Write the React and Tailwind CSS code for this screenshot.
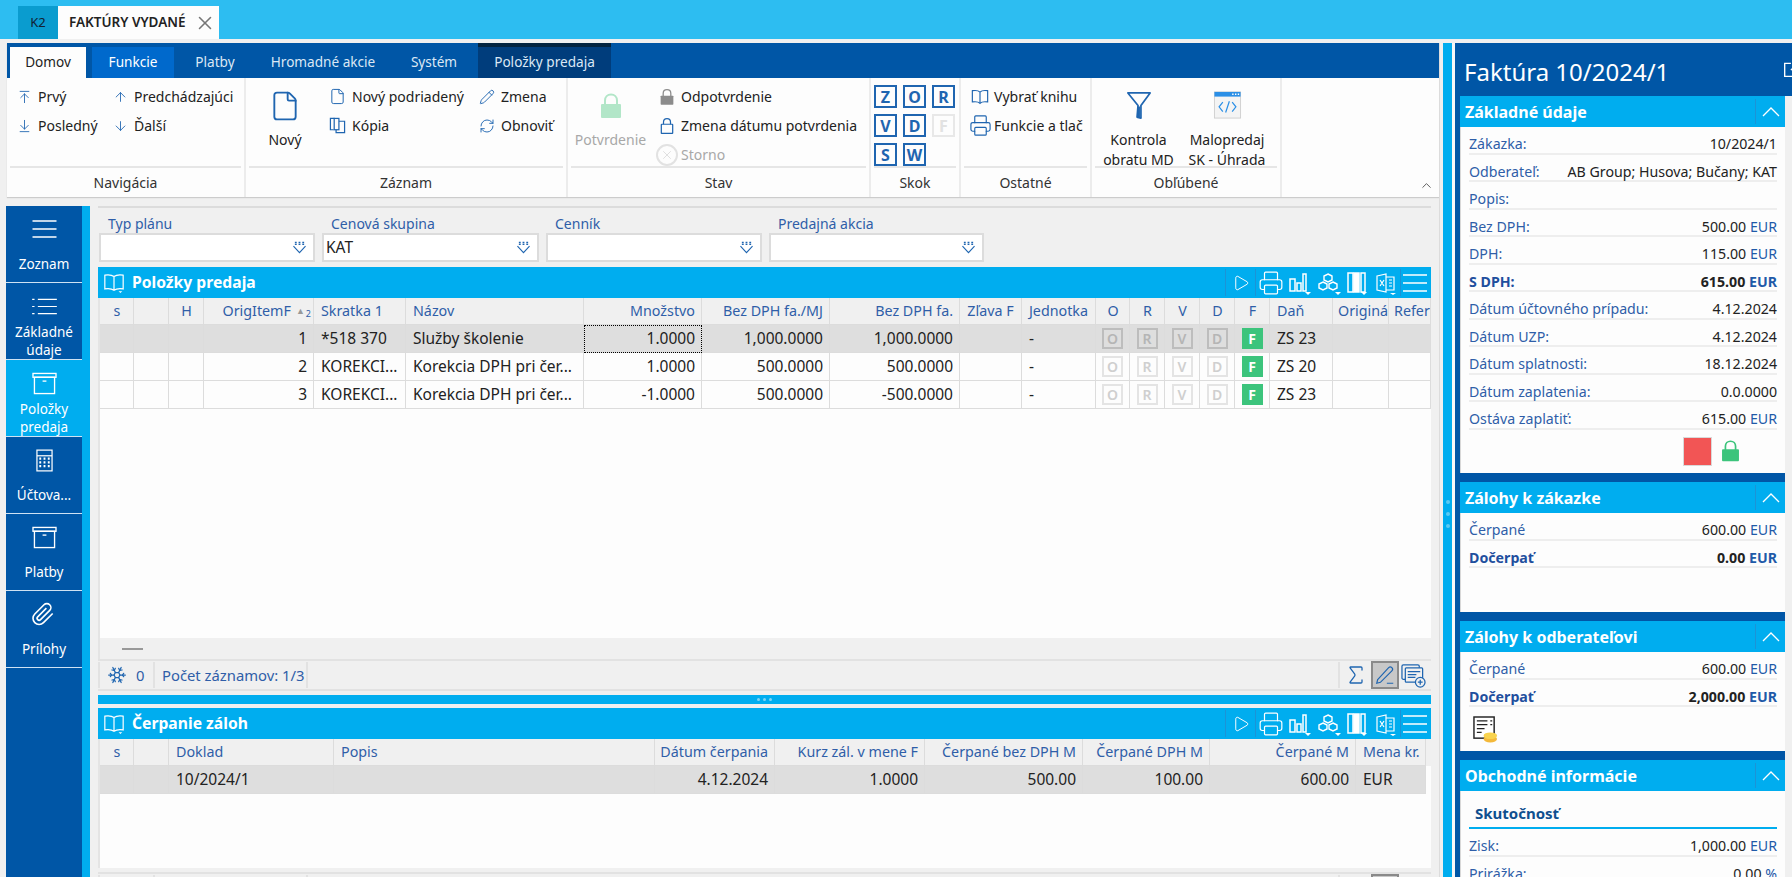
import React from "react";
import { ArrowUpToLine, ArrowDownToLine, ArrowUp, ArrowDown, File, Pencil, RefreshCw, Printer, X, ChevronUp, Snowflake, Sigma, Play } from "lucide-react";

const Book = ({ className = "w-[18px] h-[18px]" }) => (
  <svg viewBox="0 0 20 20" fill="none" stroke="currentColor" strokeWidth="1.3" className={className}>
    <path d="M10 4.5C8.5 3 5 2.5 1.5 3v12.5c3.5-.5 7 0 8.500 1.500 1.500-1.500 5-2 8.500-1.500V3C15 2.500 11.500 3 10 4.500zM10 4.500V17" />
  </svg>
);
const GridBook = () => (
  <svg viewBox="0 0 24 24" fill="none" stroke="white" strokeWidth="1.3" className="w-[22px] h-[24px]">
    <path d="M12 5C10 3.500 5.500 3 2 3.500v15c3.500-.5 8 0 10 1.500 2-1.500 6.500-2 10-1.500v-15C18.500 3 14 3.500 12 5zM12 5v15" />
    <path d="M17 21l4 0-2 2z" fill="white" stroke="none" />
  </svg>
);
const ChartIcon = () => (
  <svg viewBox="0 0 24 24" fill="none" stroke="white" strokeWidth="1.5" className="w-[24px] h-[24px]">
    <rect x="2" y="8" width="5" height="12" /><rect x="9" y="12" width="4" height="8" /><path d="M15 20h3V3h-3z" />
    <path d="M17 21h6l-3 3z" fill="white" stroke="none" />
  </svg>
);
const BoxesIcon = () => (
  <svg viewBox="0 0 24 24" fill="none" stroke="white" strokeWidth="1.4" className="w-[24px] h-[24px]">
    <path d="M11 3l4 2v4l-4 2-4-2V5zM6 11l4 2v4l-4 2-4-2v-4zM16 11l4 2v4l-4 2-4-2v-4z" />
    <path d="M18 21h6l-3 3z" fill="white" stroke="none" />
  </svg>
);
const ColsIcon = () => (
  <svg viewBox="0 0 24 24" fill="none" stroke="white" strokeWidth="1.5" className="w-[24px] h-[24px]">
    <rect x="2" y="2" width="5" height="19" /><rect x="8" y="2" width="5" height="19" fill="white" /><rect x="15" y="2" width="4" height="19" />
    <path d="M15 21h6l-3 3z" fill="white" stroke="none" />
  </svg>
);
const ExcelIcon = () => (
  <svg viewBox="0 0 24 24" fill="none" stroke="white" strokeWidth="1.2" className="w-[24px] h-[24px]">
    <path d="M3 5l9-2v18l-9-2z" /><path d="M12 6h8v13h-8M15 9h3M15 12h3M15 15h3M6 9l4 6M10 9l-4 6" />
    <path d="M16 22h6l-3 2z" fill="white" stroke="none" />
  </svg>
);
const MenuLines = ({ className = "w-[24px] h-[22px]", stroke = "white" }) => (
  <svg viewBox="0 0 24 22" fill="none" stroke={stroke} strokeWidth="1.3" className={className}>
    <path d="M0 3h24M0 11h24M0 19h24" />
  </svg>
);
const TableAdd = () => (
  <svg viewBox="0 0 26 26" fill="none" stroke="#1f65b0" strokeWidth="1.3" className="w-[25px] h-[25px]">
    <rect x="1" y="2" width="18" height="15" rx="1.500" /><rect x="4.500" y="5" width="18" height="15" rx="1" fill="#f0f0f0" />
    <path d="M7 9h13M7 12h9M7 15h8" /><circle cx="20" cy="20" r="5" fill="#f0f0f0" /><path d="M20 17.500v5M17.500 20h5" />
  </svg>
);
const PencilLine = () => (
  <svg viewBox="0 0 24 24" fill="none" stroke="#1f65b0" strokeWidth="1.300" className="w-[22px] h-[22px]">
    <path d="M4 17L16 4c1-1 2.500-1 3.500 0s1 2.500 0 3.500L7 20l-4 1zM14 21h7" />
  </svg>
);
const DropIcon = () => (
  <svg viewBox="0 0 16 14" className="w-[15px] h-[13px]" fill="none" stroke="#1f65b0" strokeWidth="1.200">
    <path d="M1.500 5.500L8 12.500l6.500-7" /><path d="M3 1.500h2M7 1.500h2M11 1.500h2M3 3.500h2M7 3.500h2M11 3.500h2" strokeWidth="1.500" />
  </svg>
);
const CopyIcon = () => (
  <svg viewBox="0 0 18 18" className="w-[17px] h-[17px]" fill="none" stroke="#1f65b0" strokeWidth="1.300">
    <path d="M6 1.500H1.500v12H5" /><rect x="5.500" y="1.500" width="5" height="12" /><path d="M10.500 4.500h6V16.500h-9V13.500" />
  </svg>
);
const LockFill = ({ fill, className }) => (
  <svg viewBox="0 0 22 26" className={className}>
    <path d="M5 12V7.500C5 4 7.500 1.500 11 1.500S17 4 17 7.500V12" fill="none" stroke={fill} strokeWidth="2" />
    <rect x="1" y="11" width="20" height="14" rx="1" fill={fill} />
  </svg>
);
const LockOutline = () => (
  <svg viewBox="0 0 16 20" className="w-[14px] h-[18px]" fill="none" stroke="#1f65b0" strokeWidth="1.400">
    <path d="M4 8V5.500C4 3 5.800 1.500 8 1.500s4 1.500 4 4V8" /><rect x="1.500" y="8" width="13" height="10.500" rx=".5" />
  </svg>
);
const Funnel = () => (
  <svg viewBox="0 0 26 30" className="w-[26px] h-[29px]" fill="none" stroke="#1f65b0" strokeWidth="1.800">
    <path d="M1.500 2h23L15 15v13l-4-1 1-12z" strokeLinejoin="round" />
    <path d="M11 16h3v12h-3z" fill="#1f65b0" stroke="none" />
  </svg>
);
const CodeWin = () => (
  <svg viewBox="0 0 30 30" className="w-[29px] h-[28px]">
    <rect x="1" y="1" width="28" height="28" fill="#f4f4f4" stroke="#cfcfcf" />
    <rect x="1" y="1" width="28" height="5" fill="#2b8fe6" />
    <path d="M20 3.500h1.500M23 3.500h1.500M26 3.500h1.500" stroke="white" strokeWidth="1.500" />
    <path d="M10 12l-4 5 4 5M20 12l4 5-4 5M17 11l-4 12" fill="none" stroke="#2b8fe6" strokeWidth="1.300" />
  </svg>
);
const DocCoins = () => (
  <svg viewBox="0 0 26 28" className="w-[25px] h-[27px]">
    <rect x="1" y="1" width="21" height="22" fill="white" stroke="#222" strokeWidth="1.500" />
    <path d="M4 5h11M18 5h2M4 9h11M18 9h2M4 13h8M4 17h5" stroke="#222" strokeWidth="1.300" />
    <ellipse cx="18" cy="24" rx="7" ry="3.500" fill="#f4b93a" />
    <ellipse cx="18" cy="20.500" rx="7" ry="3.500" fill="#f9d34e" />
  </svg>
);
const ArchiveIcon = () => (
  <svg viewBox="0 0 26 24" className="w-[25px] h-[23px]" fill="none" stroke="white" strokeWidth="1.400">
    <rect x="1" y="1.500" width="24" height="4" /><rect x="2.500" y="5.500" width="21" height="17" /><path d="M11 9.500h4" />
  </svg>
);
const CalcIcon = () => (
  <svg viewBox="0 0 18 24" className="w-[17px] h-[23px]" fill="none" stroke="white" strokeWidth="1.300">
    <rect x="1" y="1" width="16" height="22" /><path d="M1 7h16" />
    <path d="M3.500 10h2M8 10h2M12.500 10h2M3.500 14h2M8 14h2M12.500 14h2M3.500 18h2M8 18h2M12.500 18h2" strokeWidth="2.500" />
  </svg>
);
const ListIcon = () => (
  <svg viewBox="0 0 26 20" className="w-[25px] h-[19px]" fill="none" stroke="white" strokeWidth="1.300">
    <path d="M6 2.500h20M6 10h20M6 17.500h20M0 2.500h2.500M0 10h2.500M0 17.500h2.500" />
  </svg>
);
const ClipIcon = () => (
  <svg viewBox="0 0 24 24" className="w-[26px] h-[26px]" fill="none" stroke="white" strokeWidth="1.500">
    <path d="M20 11.500l-8.500 8.500a5.500 5.500 0 0 1-8-8L12 3.500a3.700 3.700 0 0 1 5.300 5.200l-8.500 8.500a1.800 1.800 0 0 1-2.600-2.600l8-8" />
  </svg>
);
const Chevron = () => (
  <svg viewBox="0 0 18 10" className="w-[18px] h-[10px]" fill="none" stroke="white" strokeWidth="1.300">
    <path d="M1 9l8-8 8 8" />
  </svg>
);

const RBtn = ({ icon, children, w, muted }) => (
  <div className={`flex items-center h-[29px] whitespace-nowrap ${w || ""} ${muted ? "text-[#a8a8a8]" : "text-[#222]"}`}>
    {icon}{children}
  </div>
);
const Ico = ({ children, className }) => <span className={`flex justify-center items-center ${className}`}>{children}</span>;
const S = { size: 18, strokeWidth: 1.4, color: "#1f65b0" };

const Group = ({ label, className, children }) => (
  <div className={`flex flex-col shrink-0 border-r-2 border-[#ececec] pr-[3px] mr-[3px] ${className}`}>
    <div className="h-[90px] pt-[4px] flex border-b-2 border-[#e6e6e6]">{children}</div>
    <div className="flex-1 flex items-center justify-center text-[#333] text-[14px]">{label}</div>
  </div>
);
const Jump = ({ c, off }) => (
  <div className={`w-[23px] h-[23px] flex items-center justify-center font-bold text-[16px] border-2 ${off ? "border-[#e8e8e8] text-[#e2e2e2]" : "border-[#1f65b0] text-[#1f65b0]"}`}>{c}</div>
);

const Ribbon = () => (
  <div className="ml-[7px] h-[154px] bg-[#fdfdfd] flex flex-col shadow-[0_1px_1px_#ccc]">
    <div className="h-[35px] bg-[#0056a6] flex items-end text-[13.600px] text-[#dbe8f5] pl-[3px]">
      <div className="w-[76px] h-[31px] bg-[#fdfdfd] text-[#222] flex items-center justify-center">Domov</div>
      <div className="ml-[6px] w-[82px] h-[31px] bg-[#0069cc] text-white flex items-center justify-center">Funkcie</div>
      <div className="w-[82px] h-[31px] flex items-center justify-center">Platby</div>
      <div className="w-[134px] h-[31px] flex items-center justify-center">Hromadné akcie</div>
      <div className="w-[88px] h-[31px] flex items-center justify-center">Systém</div>
      <div className="w-[133px] h-[35px] bg-[#003d7c] border-t-4 border-[#02233f] flex items-center justify-center">Položky predaja</div>
    </div>
    <div className="flex-1 flex pl-[3px] text-[14px] relative">
      <Group label="Navigácia" className="w-[236px]">
        <div className="w-[103px] pl-[7px]">
          <RBtn icon={<Ico className="w-[15px] mr-[6px]"><ArrowUpToLine {...S} /></Ico>}>Prvý</RBtn>
          <RBtn icon={<Ico className="w-[15px] mr-[6px]"><ArrowDownToLine {...S} /></Ico>}>Posledný</RBtn>
        </div>
        <div>
          <RBtn icon={<Ico className="w-[15px] mr-[6px]"><ArrowUp {...S} /></Ico>}>Predchádzajúci</RBtn>
          <RBtn icon={<Ico className="w-[15px] mr-[6px]"><ArrowDown {...S} /></Ico>}>Ďalší</RBtn>
        </div>
      </Group>
      <Group label="Záznam" className="w-[319px]">
        <div className="w-[72px] flex flex-col items-center pt-[8px]">
          <File size={32} strokeWidth={1.400} color="#1f65b0" />
          <div className="mt-[7px] text-[#222]">Nový</div>
        </div>
        <div className="w-[158px] pl-[8px]">
          <RBtn icon={<Ico className="w-[17px] mr-[6px]"><File {...S} size={19} /></Ico>}>Nový podriadený</RBtn>
          <RBtn icon={<Ico className="w-[17px] mr-[6px]"><CopyIcon /></Ico>}>Kópia</RBtn>
        </div>
        <div>
          <RBtn icon={<Ico className="w-[16px] mr-[6px]"><Pencil {...S} size={16} /></Ico>}>Zmena</RBtn>
          <RBtn icon={<Ico className="w-[16px] mr-[6px]"><RefreshCw {...S} size={16} /></Ico>}>Obnoviť</RBtn>
        </div>
      </Group>
      <Group label="Stav" className="w-[300px]">
        <div className="w-[78px] flex flex-col items-center pt-[11px] pl-[1px]">
          <LockFill fill="#b2e6c8" className="w-[22px] h-[26px]" />
          <div className="mt-[10px] text-[#a8a8a8]">Potvrdenie</div>
        </div>
        <div className="pl-[7px]">
          <RBtn icon={<Ico className="w-[22px] mr-[3px]"><LockFill fill="#8c8c8c" className="w-[14px] h-[18px]" /></Ico>}>Odpotvrdenie</RBtn>
          <RBtn icon={<Ico className="w-[22px] mr-[3px]"><LockOutline /></Ico>}>Zmena dátumu potvrdenia</RBtn>
          <RBtn muted icon={<Ico className="w-[22px] mr-[3px] h-[22px] rounded-full border-2 border-[#e2e2e2]"><X size={14} color="#dcdcdc" strokeWidth={1.500} /></Ico>}>Storno</RBtn>
        </div>
      </Group>
      <Group label="Skok" className="w-[87px]">
        <div className="grid grid-cols-[23px_23px_23px] gap-x-[6px] gap-y-[6px] pt-[3px] h-[80px] content-start">
          <Jump c="Z" /><Jump c="O" /><Jump c="R" /><Jump c="V" /><Jump c="D" /><Jump c="F" off /><Jump c="S" /><Jump c="W" />
        </div>
      </Group>
      <Group label="Ostatné" className="w-[128px]">
        <div className="pl-[4px]">
          <RBtn icon={<Ico className="w-[24px] mr-[2px] text-[#1f65b0]"><Book /></Ico>}>Vybrať knihu</RBtn>
          <RBtn icon={<Ico className="w-[24px] mr-[2px]"><Printer size={23} strokeWidth={1.200} color="#1f65b0" /></Ico>}>Funkcie a tlač</RBtn>
        </div>
      </Group>
      <Group label="Obľúbené" className="w-[187px]">
        <div className="w-[86px] flex flex-col items-center pt-[9px] pl-[1px] text-[#222] text-center leading-[20px]">
          <div className="h-[39px] shrink-0"><Funnel /></div>
          <div>Kontrola</div><div>obratu MD</div>
        </div>
        <div className="w-[92px] flex flex-col items-center pt-[9px] text-[#222] text-center leading-[20px]">
          <div className="h-[39px] shrink-0"><CodeWin /></div>
          <div>Malopredaj</div><div>SK - Úhrada</div>
        </div>
      </Group>
      <ChevronUp size={15} color="#555" strokeWidth={1.500} className="absolute right-[5px] bottom-[4px]" />
    </div>
  </div>
);

const NavItem = ({ icon, label, active, two }) => (
  <div className={`h-[77px] shrink-0 flex flex-col items-center border-b border-[#cfe2f3] text-white text-[13.500px] leading-[18px] text-center ${active ? "bg-[#00adef]" : ""}`}>
    <div className="h-[34px] mt-[6px] flex items-center justify-center">{icon}</div>
    <div className={`flex-1 flex flex-col justify-center ${two ? "" : "pb-[1px]"}`}>{label}</div>
  </div>
);
const Sidebar = () => (
  <div className="w-[84px] ml-[6px] shrink-0 bg-[#0056a6] border-r-8 border-[#00adef] flex flex-col">
    <NavItem icon={<MenuLines className="w-[25px] h-[22px]" />} label="Zoznam" />
    <NavItem two icon={<ListIcon />} label={<>Základné<br />údaje</>} />
    <NavItem two active icon={<ArchiveIcon />} label={<>Položky<br />predaja</>} />
    <NavItem icon={<CalcIcon />} label="Účtova..." />
    <NavItem icon={<ArchiveIcon />} label="Platby" />
    <NavItem icon={<ClipIcon />} label="Prílohy" />
  </div>
);

const Filter = ({ label, value, w }) => (
  <div className={`shrink-0 ${w}`}>
    <div className="h-[18px] pl-[9px] text-[14px] leading-[18px] text-[#2f5ea8]">{label}</div>
    <div className="h-[29px] bg-white border-2 border-[#dcdcdc] flex items-center px-[2px] text-[15.500px] text-[#222]">
      <span className="flex-1">{value}</span>
      <span className="mr-[4px]"><DropIcon /></span>
    </div>
  </div>
);

const TBtn = ({ w, children, sep }) => (
  <div className={`h-[27px] flex items-center justify-center ${w} ${sep ? "border-l border-[#1c93d6]" : ""}`}>{children}</div>
);
const TitleBar = ({ title }) => (
  <div className="h-[31px] bg-[#00adef] flex items-center text-white shrink-0">
    <span className="ml-[5px] mr-[7px] flex"><GridBook /></span>
    <span className="font-bold text-[15.700px]">{title}</span>
    <div className="ml-auto flex items-center pr-[2px]">
      <TBtn w="w-[30px]" sep><Play size={18} strokeWidth={1.300} color="white" /></TBtn>
      <TBtn w="w-[30px]" sep><Printer size={26} strokeWidth={1.100} color="white" /></TBtn>
      <TBtn w="w-[29px]"><ChartIcon /></TBtn>
      <TBtn w="w-[30px]"><BoxesIcon /></TBtn>
      <TBtn w="w-[28px]"><ColsIcon /></TBtn>
      <TBtn w="w-[28px]"><ExcelIcon /></TBtn>
      <TBtn w="w-[29px]" sep><MenuLines /></TBtn>
    </div>
  </div>
);

const Cell = ({ children, r, h, className = "" }) => (
  <div className={`flex items-center overflow-hidden whitespace-nowrap border-r border-b ${h ? "text-[#2f5ea8] border-[#dcdcdc] h-[27px] text-[14.300px]" : "text-[#222] border-[#dcdcdc] h-[28px] text-[15.500px]"} pl-[7px] pr-[6px] ${r ? "justify-end" : ""} ${className}`}>{children}</div>
);
const Flag = ({ c, dark }) => (
  <div className={`w-[21px] h-[21px] flex items-center justify-center border-2 text-[14px] font-semibold ${dark ? "border-[#bdbdbd] text-[#b5b5b5]" : "border-[#e4e4e4] text-[#cfcfcf]"}`}>{c}</div>
);
const Head = ({ items }) => items.map(([t, r, c], i) => <Cell key={i} h r={r} className={c}>{t}</Cell>);

const Row1 = ({ d, sel, focus }) => {
  const bg = sel ? "bg-[#dedede] border-[#cfcfcf]" : "";
  return (
    <>
      <Cell className={bg} /><Cell className={bg} /><Cell className={bg} />
      <Cell r className={bg}>{d[0]}</Cell>
      <Cell className={bg}>{d[1]}</Cell>
      <Cell className={bg}>{d[2]}</Cell>
      <Cell r className={`${bg} ${focus ? "border border-dotted border-black" : ""}`}>{d[3]}</Cell>
      <Cell r className={bg}>{d[4]}</Cell>
      <Cell r className={bg}>{d[5]}</Cell>
      <Cell className={bg} />
      <Cell className={bg}>-</Cell>
      {["O", "R", "V", "D"].map(c => <Cell key={c} className={`${bg} justify-center !px-0`}><Flag c={c} dark={sel} /></Cell>)}
      <Cell className={`${bg} justify-center !px-0`}><div className="w-[21px] h-[21px] bg-[#3cc47c] text-white text-[14px] font-bold flex items-center justify-center">F</div></Cell>
      <Cell className={bg}>{d[6]}</Cell>
      <Cell className={bg} /><Cell className={bg} />
    </>
  );
};

const StatusBar = ({ className = "", bare }) => (
  <div className={`h-[32px] shrink-0 flex items-center bg-[#f0f0f0] border-y-2 border-[#e2e2e2] text-[14.800px] text-[#2f5ea8] whitespace-nowrap ${className}`}>
    <div className="h-[26px] w-[57px] flex items-center border-x-2 border-[#e2e2e2] pl-[7px]">
      <Snowflake size={20} strokeWidth={1.500} color="#1f65b0" />
      {!bare && <span className="ml-[9px]">0</span>}
    </div>
    <div className="h-[26px] w-[153px] flex items-center border-r-2 border-[#e2e2e2] pl-[7px]">{!bare && "Počet záznamov: 1/3"}</div>
    <div className="ml-auto flex items-center h-[28px] pr-[4px]">
      <div className="h-[26px] border-l-2 border-[#e2e2e2] w-[33px] flex items-center justify-center"><Sigma size={24} strokeWidth={1.300} color="#1f65b0" /></div>
      <div className="w-[28px] h-[28px] border-2 border-[#8a8a8a] bg-[#c8c8c8] flex items-center justify-center"><PencilLine /></div>
      <div className="w-[28px] flex justify-center"><TableAdd /></div>
    </div>
  </div>
);

const Main = () => (
  <div className="w-[1333px] ml-[8px] shrink-0 flex flex-col min-h-0">
    <div className="border-t-2 border-[#dcdcdc] h-[61px] shrink-0 pt-[7px] flex gap-[7px] pl-[1px]">
      <Filter label="Typ plánu" w="w-[216px]" />
      <Filter label="Cenová skupina" value="KAT" w="w-[217px]" />
      <Filter label="Cenník" w="w-[216px]" />
      <Filter label="Predajná akcia" w="w-[215px]" />
    </div>
    <div className="h-[424px] shrink-0 flex flex-col">
      <TitleBar title="Položky predaja" />
      <div className="flex-1 bg-[#fdfdfd] border-l-2 border-[#e4e4e4]">
        <div className="grid grid-cols-[34px_35px_35px_110px_92px_178px_118px_128px_130px_62px_74px_34px_35px_35px_35px_35px_63px_56px_42px] bg-[#f0f0f0]">
          <Head items={[["s", 0, "justify-center"], [""], ["H", 0, "justify-center"], [<>OrigItemF<span className="ml-[5px] text-[9px] text-[#999]">▲</span><span className="text-[9px] ml-[1px] mt-[6px]">2</span></>, 1, "!pr-[2px]"], ["Skratka 1"], ["Názov"], ["Množstvo", 1], ["Bez DPH fa./MJ", 1], ["Bez DPH fa.", 1], ["Zľava F", 0, "justify-center !px-0"], ["Jednotka", 0, "justify-center !px-0"], ["O", 0, "justify-center"], ["R", 0, "justify-center"], ["V", 0, "justify-center"], ["D", 0, "justify-center"], ["F", 0, "justify-center"], ["Daň"], ["Originá", 0, "!pl-[5px] !pr-0"], ["Refer", 0, "!pl-[5px] !pr-0"]]} />
        </div>
        <div className="grid grid-cols-[34px_35px_35px_110px_92px_178px_118px_128px_130px_62px_74px_34px_35px_35px_35px_35px_63px_56px_42px]">
          <Row1 sel focus d={["1", "*518 370", "Služby školenie", "1.0000", "1,000.0000", "1,000.0000", "ZS 23"]} />
          <Row1 d={["2", "KOREKCI...", "Korekcia DPH pri čer...", "1.0000", "500.0000", "500.0000", "ZS 20"]} />
          <Row1 d={["3", "KOREKCI...", "Korekcia DPH pri čer...", "-1.0000", "500.0000", "-500.0000", "ZS 23"]} />
        </div>
      </div>
      <div className="h-[21px] shrink-0 bg-[#f0f0f0] flex items-center pl-[22px] border-l-2 border-[#e4e4e4]"><div className="w-[21px] h-[2px] bg-[#999]" /></div>
      <StatusBar />
    </div>
    <div className="h-[17px] shrink-0 flex flex-col justify-center">
      <div className="h-[9px] bg-[#00adef] flex items-center justify-center gap-[3px]">
        <span className="w-[3px] h-[3px] rounded-full bg-[#7fd4f5]" /><span className="w-[3px] h-[3px] rounded-full bg-[#7fd4f5]" /><span className="w-[3px] h-[3px] rounded-full bg-[#7fd4f5]" />
      </div>
    </div>
    <div className="flex-1 min-h-0 flex flex-col">
      <TitleBar title="Čerpanie záloh" />
      <div className="h-[129px] shrink-0 bg-[#fdfdfd] border-l-2 border-[#e4e4e4]">
        <div className="grid grid-cols-[34px_35px_165px_321px_120px_150px_158px_127px_146px_70px] bg-[#f0f0f0]">
          <Head items={[["s", 0, "justify-center"], [""], ["Doklad"], ["Popis"], ["Dátum čerpania", 1], ["Kurz zál. v mene F", 1], ["Čerpané bez DPH M", 1], ["Čerpané DPH M", 1], ["Čerpané M", 1], ["Mena kr."]]} />
        </div>
        <div className="grid grid-cols-[34px_35px_165px_321px_120px_150px_158px_127px_146px_70px]">
          {[["", 0], ["", 0], ["10/2024/1", 0], ["", 0], ["4.12.2024", 1], ["1.0000", 1], ["500.00", 1], ["100.00", 1], ["600.00", 1], ["EUR", 0]].map(([t, r], i) => (
            <Cell key={i} r={r} className="bg-[#dedede] border-[#cfcfcf]">{t}</Cell>
          ))}
        </div>
      </div>
      <StatusBar bare className="mt-[4px]" />
    </div>
  </div>
);

const SecHead = ({ title }) => (
  <div className="h-[31px] bg-[#00adef] flex items-center text-white shrink-0">
    <span className="flex-1 pl-[5px] font-bold text-[16px]">{title}</span>
    <div className="w-[30px] h-[25px] border-l border-[#1c93d6] flex items-center justify-center"><Chevron /></div>
  </div>
);
const Val = ({ v, cur }) => <span>{v}{cur && <span className="text-[#1f5aa8]"> {cur}</span>}</span>;
const PRow = ({ l, v, cur, b }) => (
  <div className={`h-[27.500px] pt-[8px] flex items-center justify-between border-b-2 border-[#eeeeee] ${b ? "font-bold" : ""}`}>
    <span className={b ? "text-[#1f4f9e]" : "text-[#2f5ea8]"}>{l}</span>
    <span className="text-[#222] whitespace-nowrap"><Val v={v} cur={cur} /></span>
  </div>
);
const Section = ({ title, h, children }) => (
  <div className={`flex flex-col shrink-0 ${h}`}>
    <SecHead title={title} />
    <div className="flex-1 bg-[#fdfdfd] px-[8px] border-l border-[#d8d8d8] overflow-hidden">{children}</div>
  </div>
);

const RightPanel = () => (
  <div className="w-[337px] shrink-0 bg-[#0056a6] flex flex-col overflow-hidden relative">
    <div className="h-[53px] shrink-0 pl-[9px] pt-[4px] flex items-center text-white text-[24px] relative">
      Faktúra 10/2024/1
      <svg viewBox="0 0 16 16" className="absolute left-[328px] top-[17px] w-[18px] h-[18px]" fill="none" stroke="white" strokeWidth="1.200">
        <path d="M7 3H1.500v11.500H13V9M9 1.500h5.500V7M14 2L7 9" />
      </svg>
    </div>
    <div className="flex-1 flex min-h-0 text-[14.200px]">
      <div className="w-[5px] shrink-0" />
      <div className="w-[325px] shrink-0 flex flex-col gap-[9px]">
        <Section title="Základné údaje" h="h-[377px]">
          <PRow l="Zákazka:" v="10/2024/1" />
          <PRow l="Odberateľ:" v="AB Group; Husova; Bučany; KAT" />
          <PRow l="Popis:" v="" />
          <PRow l="Bez DPH:" v="500.00" cur="EUR" />
          <PRow l="DPH:" v="115.00" cur="EUR" />
          <PRow b l="S DPH:" v="615.00" cur="EUR" />
          <PRow l="Dátum účtovného prípadu:" v="4.12.2024" />
          <PRow l="Dátum UZP:" v="4.12.2024" />
          <PRow l="Dátum splatnosti:" v="18.12.2024" />
          <PRow l="Dátum zaplatenia:" v="0.0.0000" />
          <PRow l="Ostáva zaplatiť:" v="615.00" cur="EUR" />
          <div className="flex justify-end items-center mt-[7px] pr-[37px] gap-[9px]">
            <div className="w-[29px] h-[29px] bg-[#f25555] border border-[#d9d9d9]" />
            <LockFill fill="#3cc47c" className="w-[19px] h-[22px]" />
          </div>
        </Section>
        <Section title="Zálohy k zákazke" h="h-[130px]">
          <PRow l="Čerpané" v="600.00" cur="EUR" />
          <PRow b l="Dočerpať" v="0.00" cur="EUR" />
        </Section>
        <Section title="Zálohy k odberateľovi" h="h-[130px]">
          <PRow l="Čerpané" v="600.00" cur="EUR" />
          <PRow b l="Dočerpať" v="2,000.00" cur="EUR" />
          <div className="mt-[9px] pl-[4px]"><DocCoins /></div>
        </Section>
        <Section title="Obchodné informácie" h="h-[200px]">
          <div className="h-[38px] flex items-end pb-[3px] pl-[6px] font-bold text-[15px] text-[#0f4f8f] border-b-2 border-[#00adef]">Skutočnosť</div>
          <PRow l="Zisk:" v="1,000.00" cur="EUR" />
          <PRow l="Prirážka:" v="0.00" cur="%" />
        </Section>
      </div>
      <div className="flex-1 bg-[#f0f0f0]" />
    </div>
  </div>
);

export default function App() {
  return (
    <div className="w-[1792px] h-[877px] overflow-hidden bg-[#f0f0f0] flex flex-col font-['Noto_Sans',sans-serif]">
      <div className="h-[39px] shrink-0 bg-[#2dbdf1] flex items-end pl-[18px]">
        <div className="w-[40px] h-[33px] bg-[#0a9ccf] text-[#123] text-[13px] flex items-center justify-center">K2</div>
        <div className="w-[161px] h-[33px] bg-[#fdfdfd] flex items-center pl-[11px] text-[13.500px] font-semibold text-[#222]">
          FAKTÚRY VYDANÉ
          <X size={22} strokeWidth={1.700} color="#777" className="ml-[9px]" />
        </div>
      </div>
      <div className="h-[4px] shrink-0" />
      <div className="flex-1 min-h-0 flex">
        <div className="w-[1439px] shrink-0 flex flex-col min-h-0">
          <Ribbon />
          <div className="h-[9px] shrink-0" />
          <div className="flex-1 min-h-0 flex">
            <Sidebar />
            <Main />
          </div>
        </div>
        <div className="w-[4px] shrink-0 border-l border-[#dcdcdc]" />
        <div className="w-[9px] shrink-0 bg-[#00adef] flex flex-col items-center pt-[457px] gap-[8px]">
          <span className="w-[4px] h-[4px] rounded-full bg-[#5cc9f2]" /><span className="w-[4px] h-[4px] rounded-full bg-[#5cc9f2]" /><span className="w-[4px] h-[4px] rounded-full bg-[#5cc9f2]" />
        </div>
        <div className="w-[3px] shrink-0 bg-[#f7f7f7]" />
        <RightPanel />
      </div>
    </div>
  );
}
